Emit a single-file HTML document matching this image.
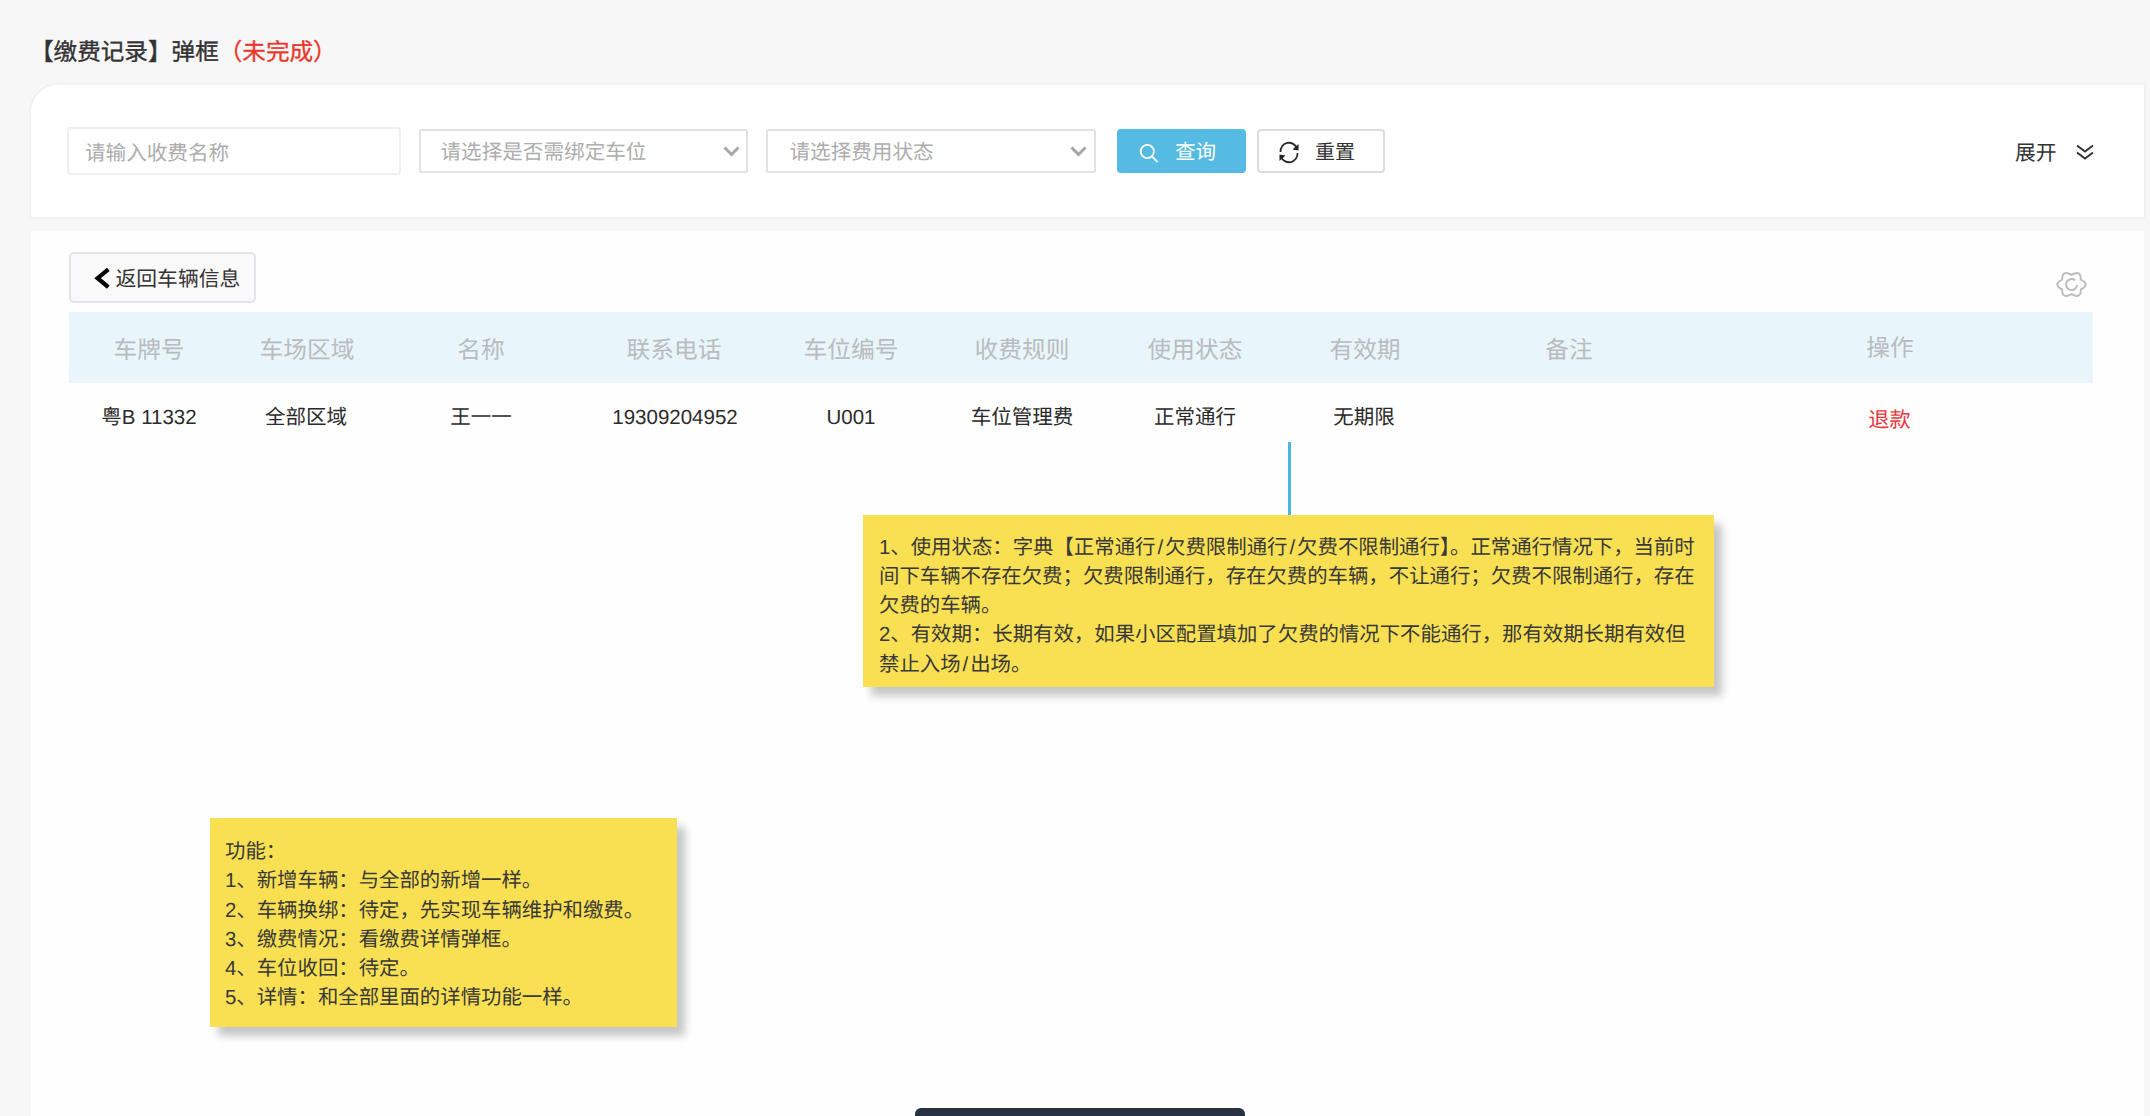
<!DOCTYPE html>
<html lang="zh-CN"><head><meta charset="utf-8">
<style>
*{box-sizing:border-box;margin:0;padding:0}
html,body{width:2150px;height:1116px;overflow:hidden;background:#f7f7f7;font-family:"Liberation Sans",sans-serif;color:#333;text-rendering:geometricPrecision}
.abs{position:absolute}
svg{position:absolute;overflow:visible}
.title{left:30px;top:39px;font-size:23.6px;line-height:28px;color:#333;white-space:nowrap;-webkit-text-stroke:0.35px #333}
.title span{color:#e8392c;-webkit-text-stroke:0.35px #e8392c}
.card1{left:29px;top:83px;width:2117px;height:136px;background:#fff;border:2px solid #f1f1f1;border-top-left-radius:29px}
.inp{border:2px solid #efefef;border-radius:4px;background:#fff;color:#adadad;line-height:24px;white-space:nowrap}
.sel{border-color:#e2e2e2;border-radius:2.5px}
.sl{margin:0 2px}
.card2{left:31px;top:231px;width:2113px;height:900px;background:#fefefe}
.btn-q{left:1117px;top:129px;width:129px;height:44px;background:#55bbe2;border-radius:4px}
.btn-r{left:1257px;top:129px;width:128px;height:44px;background:#fff;border:2px solid #dcdcdc;border-radius:4px}
.thead{left:69px;top:312px;width:2024px;height:71px;background:#e8f5fb}
.th{top:338px;font-size:23.7px;line-height:26px;color:#b9bcbe;white-space:nowrap;transform:translateX(-50%)}
.td{top:406px;font-size:20.5px;line-height:24px;color:#2b2b2b;white-space:nowrap;transform:translateX(-50%)}
.note{white-space:nowrap;background:#f9e053;box-shadow:8px 9px 8px rgba(0,0,0,.22);font-size:20.4px;line-height:29.3px;color:#383838}
</style></head><body>
<div class="abs title">【缴费记录】弹框<span>（未完成）</span></div>

<div class="abs card1"></div>
<div class="abs inp" style="left:67px;top:127px;width:334px;height:48px;padding:12.8px 0 0 16px;font-size:20.6px">请输入收费名称</div>
<div class="abs inp sel" style="left:419px;top:129px;width:329px;height:44px;padding:9.5px 0 0 19.5px;font-size:20.6px">请选择是否需绑定车位</div>
<div class="abs inp sel" style="left:766px;top:129px;width:330px;height:44px;padding:9.5px 0 0 21.5px;font-size:20.6px">请选择费用状态</div>
<svg style="left:0;top:0" width="1" height="1"><path d="M724.5 147.5 L731.5 154.5 L738.5 147.5" fill="none" stroke="#a6a6a6" stroke-width="3"/><path d="M1071.5 147.5 L1078.5 154.5 L1085.5 147.5" fill="none" stroke="#a6a6a6" stroke-width="3"/></svg>

<div class="abs btn-q"></div>
<svg style="left:0;top:0" width="1" height="1"><circle cx="1147.3" cy="151.5" r="6.6" fill="none" stroke="#fff" stroke-width="1.8"/><path d="M1152.2 156.6 L1157 161.4" stroke="#fff" stroke-width="2" stroke-linecap="round"/></svg>
<div class="abs" style="left:1175px;top:140.5px;font-size:20.6px;line-height:24px;color:#fff">查询</div>
<div class="abs btn-r"></div>
<svg style="left:0;top:0" width="1" height="1">
<path d="M1280.5 152 A8.5 8.5 0 0 1 1297 148.5" fill="none" stroke="#2a2a2a" stroke-width="1.8"/>
<path d="M1298.5 144 L1298.5 150.5 L1292.5 149.5 Z" fill="#222"/>
<path d="M1297.5 153 A8.5 8.5 0 0 1 1281 156.5" fill="none" stroke="#2a2a2a" stroke-width="1.8"/>
<path d="M1279.5 161 L1279.5 154.5 L1285.5 155.5 Z" fill="#222"/>
</svg>
<div class="abs" style="left:1315px;top:141px;font-size:20px;line-height:24px;color:#333">重置</div>
<div class="abs" style="left:2015px;top:141.8px;font-size:20.8px;line-height:24px;color:#333">展开</div>
<svg style="left:0;top:0" width="1" height="1"><path d="M2077 145.5 L2085 151.5 L2093 145.5 M2077 152.5 L2085 158.5 L2093 152.5" fill="none" stroke="#333" stroke-width="2"/></svg>

<div class="abs card2"></div>
<div class="abs" style="left:69px;top:252px;width:187px;height:51px;background:#f9f9f9;border:2px solid #e1e4ea;border-radius:5px"></div>
<svg style="left:0;top:0" width="1" height="1"><path d="M108.3 269.3 L97.6 278.2 L108.3 287.1" fill="none" stroke="#000" stroke-width="4.2"/></svg>
<div class="abs" style="left:115.5px;top:267.5px;font-size:20.8px;line-height:24px;color:#333">返回车辆信息</div>
<svg style="left:0;top:0" width="1" height="1">
<path d="M2080.85 279.64 Q2090.55 284.50 2080.85 289.36 Q2081.02 299.35 2071.50 294.22 Q2061.98 299.35 2062.15 289.36 Q2052.45 284.50 2062.15 279.64 Q2061.98 269.65 2071.50 274.78 Q2081.02 269.65 2080.85 279.64Z" fill="none" stroke="#bdbdbd" stroke-width="2"/>
<path d="M2077 285 A5.5 5.5 0 1 1 2075 280.3" fill="none" stroke="#bdbdbd" stroke-width="2"/>
</svg>

<div class="abs thead"></div>
<div class="abs th" style="left:149px">车牌号</div>
<div class="abs th" style="left:307px">车场区域</div>
<div class="abs th" style="left:481px">名称</div>
<div class="abs th" style="left:674px">联系电话</div>
<div class="abs th" style="left:851px">车位编号</div>
<div class="abs th" style="left:1022px">收费规则</div>
<div class="abs th" style="left:1195px">使用状态</div>
<div class="abs th" style="left:1365px">有效期</div>
<div class="abs th" style="left:1569px">备注</div>
<div class="abs th" style="left:1890px;top:336px">操作</div>

<div class="abs td" style="left:149px">粤B 11332</div>
<div class="abs td" style="left:306px">全部区域</div>
<div class="abs td" style="left:481px">王一一</div>
<div class="abs td" style="left:675px">19309204952</div>
<div class="abs td" style="left:851px">U001</div>
<div class="abs td" style="left:1022px">车位管理费</div>
<div class="abs td" style="left:1195px">正常通行</div>
<div class="abs td" style="left:1364px">无期限</div>
<div class="abs td" style="left:1889.5px;top:409px;font-size:21.2px;color:#e8383d">退款</div>

<div class="abs" style="left:1288px;top:442px;width:3px;height:74px;background:#4fb5e0"></div>
<div class="abs note" style="left:863px;top:515px;width:851px;height:172px;padding:18.5px 0 0 16px">1、使用状态：字典【正常通行<span class="sl">/</span>欠费限制通行<span class="sl">/</span>欠费不限制通行】。正常通行情况下，当前时<br>间下车辆不存在欠费；欠费限制通行，存在欠费的车辆，不让通行；欠费不限制通行，存在<br>欠费的车辆。<br>2、有效期：长期有效，如果小区配置填加了欠费的情况下不能通行，那有效期长期有效但<br>禁止入场<span class="sl">/</span>出场。</div>
<div class="abs note" style="left:210px;top:818px;width:467px;height:209px;padding:20px 10px 0 15px">功能：<br>1、新增车辆：与全部的新增一样。<br>2、车辆换绑：待定，先实现车辆维护和缴费。<br>3、缴费情况：看缴费详情弹框。<br>4、车位收回：待定。<br>5、详情：和全部里面的详情功能一样。</div>

<div class="abs" style="left:915px;top:1108px;width:330px;height:30px;background:#283142;border-radius:6px"></div>
</body></html>
